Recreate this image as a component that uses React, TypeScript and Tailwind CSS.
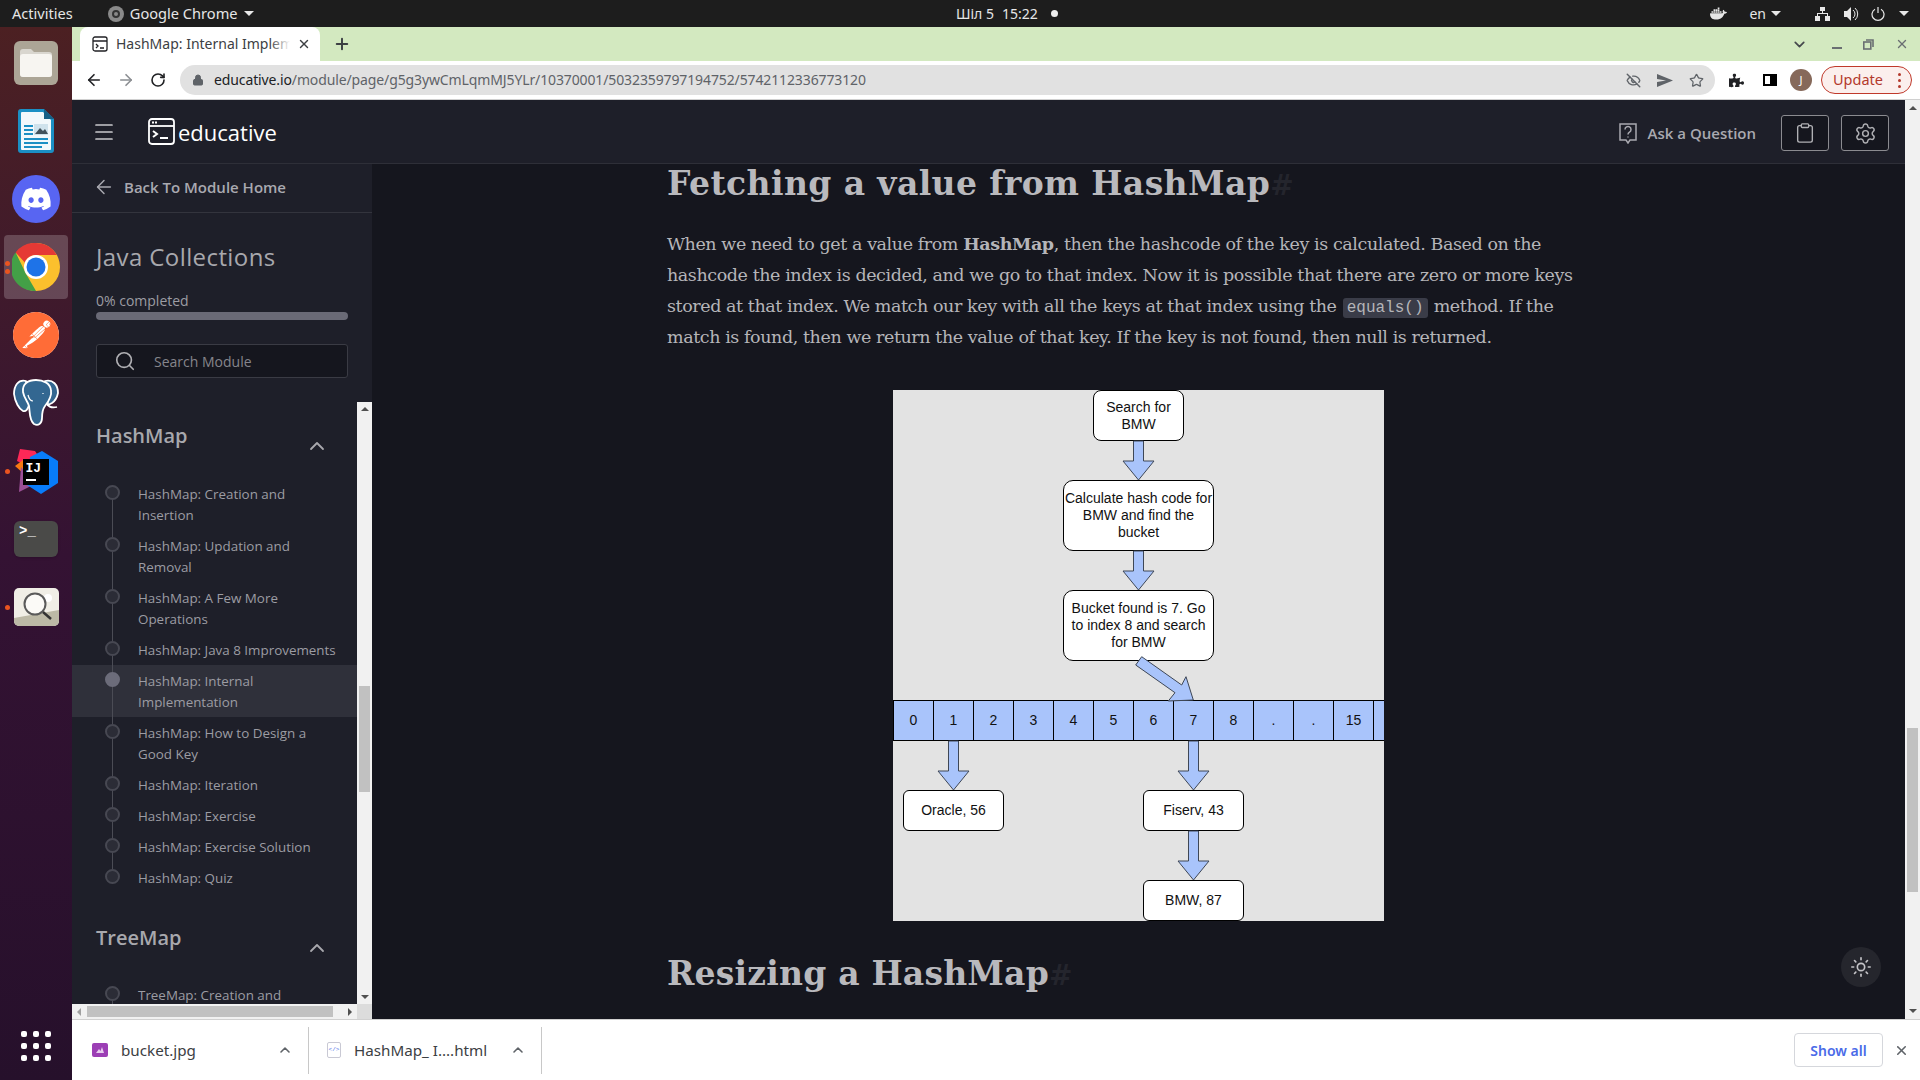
import { ArrowLeft, ChevronDown, ChevronUp, Clipboard, EyeOff, Menu, Plus, RotateCw, Search, Settings, Star, Sun, X, ArrowRight, Lock } from "lucide-react";
import { FaDiscord, FaPuzzlePiece } from "react-icons/fa";
import { SiDocker, SiPostman } from "react-icons/si";

const hashItems = [
  { text: "HashMap: Creation and Insertion" },
  { text: "HashMap: Updation and Removal" },
  { text: "HashMap: A Few More Operations" },
  { text: "HashMap: Java 8 Improvements" },
  { text: "HashMap: Internal Implementation", active: true },
  { text: "HashMap: How to Design a Good Key" },
  { text: "HashMap: Iteration" },
  { text: "HashMap: Exercise" },
  { text: "HashMap: Exercise Solution" },
  { text: "HashMap: Quiz" },
];

const cells = ["0", "1", "2", "3", "4", "5", "6", "7", "8", ".", ".", "15"];

function Caret() {
  return <span className="inline-block w-0 h-0 border-x-[5px] border-x-transparent border-t-[5px] border-t-[#e8e8e8]" />;
}

function ChromeLogo({ size }: { size: number }) {
  return (
    <svg width={size} height={size} viewBox="0 0 48 48">
      <circle cx="24" cy="24" r="24" fill="#fbc02d" />
      <path d="M24 0a24 24 0 0 1 20.8 12H24a12 12 0 0 0-11.2 7.6L3.6 9.4A24 24 0 0 1 24 0z" fill="#e53935" />
      <path d="M3.6 9.4 13.6 30l-.1.1L24 48A24 24 0 0 1 3.6 9.4z" fill="#43a047" />
      <circle cx="24" cy="24" r="12" fill="#fff" />
      <circle cx="24" cy="24" r="9.5" fill="#1e73e8" />
    </svg>
  );
}

function DockIcon({ children, dots = 0, active = false }: { children: React.ReactNode; dots?: number; active?: boolean }) {
  return (
    <div className="relative h-[68px] flex items-center justify-center">
      {active && <div className="absolute left-[4px] top-[2px] w-[64px] h-[64px] rounded bg-white/20" />}
      {dots > 0 && (
        <div className="absolute left-[5px] top-0 h-full flex flex-col justify-center gap-[3px]">
          {dots > 1 && <span className="w-[5px] h-[5px] rounded-full bg-[#e95420]" />}
          <span className="w-[5px] h-[5px] rounded-full bg-[#e95420]" />
        </div>
      )}
      <div className="relative">{children}</div>
    </div>
  );
}

function Dock() {
  return (
    <div className="w-[72px] shrink-0 flex flex-col pt-[2px] bg-gradient-to-b from-[#4c2022] via-[#341233] to-[#26102b]">
      <DockIcon>
        <svg width="44" height="44" viewBox="0 0 44 44">
          <rect width="44" height="44" rx="6" fill="#aca596" />
          <path d="M6 11a3 3 0 0 1 3-3h8l3 3h15a3 3 0 0 1 3 3v19a3 3 0 0 1-3 3H9a3 3 0 0 1-3-3z" fill="#d9d6cf" />
          <path d="M6 16a3 3 0 0 1 3-3h26a3 3 0 0 1 3 3v17a3 3 0 0 1-3 3H9a3 3 0 0 1-3-3z" fill="#f7f5f1" />
        </svg>
      </DockIcon>
      <DockIcon>
        <svg width="38" height="46" viewBox="0 0 38 46">
          <path d="M4 1h23l10 10v31a3 3 0 0 1-3 3H4a3 3 0 0 1-3-3V4a3 3 0 0 1 3-3z" fill="#1b8fc4" />
          <path d="M5 4h21l8 8v29a1 1 0 0 1-1 1H5a1 1 0 0 1-1-1V5a1 1 0 0 1 1-1z" fill="#f2f8fb" />
          <path d="M27 1l10 10H27z" fill="#155f86" />
          <rect x="7" y="17" width="9" height="2" fill="#1b8fc4" />
          <rect x="7" y="21" width="9" height="2" fill="#1b8fc4" />
          <rect x="7" y="25" width="9" height="2" fill="#1b8fc4" />
          <rect x="17" y="16" width="14" height="11" fill="#cfe2ec" />
          <path d="M18 26l5-6 3 3 2-2 3 5z" fill="#42525c" />
          <rect x="7" y="30" width="24" height="2" fill="#1b8fc4" />
          <rect x="7" y="34" width="24" height="2" fill="#1b8fc4" />
          <rect x="7" y="38" width="18" height="2" fill="#1b8fc4" />
        </svg>
      </DockIcon>
      <DockIcon>
        <div className="w-[48px] h-[48px] rounded-full bg-[#5865f2] flex items-center justify-center">
          <FaDiscord className="text-white" size={32} />
        </div>
      </DockIcon>
      <DockIcon dots={2} active>
        <ChromeLogo size={48} />
      </DockIcon>
      <DockIcon>
        <div className="w-[46px] h-[46px] rounded-full bg-white">
          <SiPostman className="text-[#ff6c37]" size={46} />
        </div>
      </DockIcon>
      <DockIcon>
        <svg width="46" height="48" viewBox="0 0 46 48" fill="#336791" stroke="#ffffff" strokeWidth="1.8" strokeLinejoin="round">
          <path d="M13 2C5 0 1 7 1 15c1 8 5 15 9 17 3 1 5-2 6-6z" />
          <path d="M32 2c8-2 13 4 13 12-1 5-3 8-6 10l-4 2z" />
          <path d="M23 1c-8 0-14 4-13 12 1 6 5 10 6 14 1 6 0 14 5 18 4 2 8 0 8-6 0-4 0-8 3-12 4-5 7-10 6-16-1-7-8-10-15-10z" />
          <path d="M34 25c2 3 6 4 10 3" fill="none" />
          <path d="M15 16c1 4 3 6 5 6M30 14v1" fill="none" strokeWidth="1.2" />
        </svg>
      </DockIcon>
      <DockIcon dots={1}>
        <svg className="ml-[2px]" width="44" height="45" viewBox="0 0 44 45">
          <path d="M5 0l15 2 4 6-14 8-8-4z" fill="#fe2857" />
          <path d="M0 17l8-6v13z" fill="#f97a12" />
          <path d="M6 18l-2 25 16-8z" fill="#9b4f96" />
          <path d="M27 2l16 10v22l-17 11-14-9 3-28z" fill="#087cfa" />
          <rect x="8" y="10" width="26" height="26" fill="#000" />
          <text x="10.5" y="23" fill="#fff" fontSize="13" fontWeight="700" fontFamily="'Liberation Mono',monospace">IJ</text>
          <rect x="11" y="30" width="10" height="2" fill="#fff" />
        </svg>
      </DockIcon>
      <DockIcon>
        <div className="w-[44px] h-[36px] rounded-md bg-[#4a4a48] text-white text-[14px] leading-[16px] pl-[5px] pt-[2px] font-bold font-['Liberation_Mono',monospace] shadow">
          {">_"}
        </div>
      </DockIcon>
      <DockIcon dots={1}>
        <svg width="45" height="38" viewBox="0 0 45 38">
          <rect width="45" height="38" rx="5" fill="#f0eee6" />
          <path d="M0 30L45 22v11a5 5 0 0 1-5 5H5a5 5 0 0 1-5-5z" fill="#bcb9a6" />
          <circle cx="34" cy="10" r="4" fill="#fff" />
          <circle cx="21" cy="16" r="10.5" fill="#fbfaf7" stroke="#5a5a5a" strokeWidth="2" />
          <path d="M29 24l8 7" stroke="#333" strokeWidth="2.5" />
        </svg>
      </DockIcon>
      <div className="mt-auto mb-[19px] mx-auto grid grid-cols-3 gap-x-[6px] gap-y-[6px]">
        {Array.from({ length: 9 }).map((_, i) => (
          <span key={i} className="w-[6px] h-[6px] rounded-[2px] bg-white" />
        ))}
      </div>
    </div>
  );
}

function TopBar() {
  return (
    <div className="h-[27px] shrink-0 bg-[#1d1d1d] text-[#e6e6e6] text-[14.6px] flex items-center relative font-['Noto_Sans',sans-serif]">
      <span className="ml-[12px]">Activities</span>
      <span className="ml-[35px] w-[16px] h-[16px] rounded-full bg-[#8a8a8a] flex items-center justify-center">
        <span className="w-[8px] h-[8px] rounded-full border-2 border-[#333]" />
      </span>
      <span className="ml-[6px]">Google Chrome</span>
      <span className="ml-[6px] flex"><Caret /></span>
      <div className="absolute left-[956px] flex items-center text-[14px]">
        <span>Шіл 5</span>
        <span className="ml-[8px]">15:22</span>
        <span className="ml-[13px] w-[7px] h-[7px] rounded-full bg-[#eee]" />
      </div>
      <div className="ml-auto flex items-center">
        <SiDocker size={17} />
        <span className="ml-[22px] text-[14px]">en</span>
        <span className="ml-[5px] flex"><Caret /></span>
        <svg className="ml-[34px]" width="15" height="14" viewBox="0 0 15 14" fill="#e8e8e8">
          <rect x="5" y="0" width="5" height="4" />
          <rect x="0" y="9" width="5" height="5" />
          <rect x="10" y="9" width="5" height="5" />
          <path d="M7 4h1v2h5v3h-1V7H3v2H2V6h5z" />
        </svg>
        <svg className="ml-[14px]" width="15" height="14" viewBox="0 0 15 14" fill="#e8e8e8">
          <path d="M0 4h3l4-4v14l-4-4H0z" />
          <path d="M9 3a5 5 0 0 1 0 8M11 1a8 8 0 0 1 0 12" stroke="#e8e8e8" fill="none" />
        </svg>
        <svg className="ml-[12px]" width="14" height="14" viewBox="0 0 14 14" fill="none" stroke="#e8e8e8" strokeWidth="1.2">
          <path d="M4 2.2a6 6 0 1 0 6 0M7 0v6" />
        </svg>
        <span className="ml-[14px] mr-[11px] flex"><Caret /></span>
      </div>
    </div>
  );
}

function TabStrip() {
  return (
    <div className="h-[34px] shrink-0 bg-[#d3e9c0] flex items-end pl-[8px] font-['Noto_Sans',sans-serif]">
      <div className="w-[240px] h-[34px] bg-white rounded-t-[8px] flex items-center pl-[12px] relative">
        <svg width="16" height="16" viewBox="0 0 16 16" fill="none" stroke="#202124" strokeWidth="1.3">
          <rect x="1" y="1" width="14" height="14" rx="2" />
          <path d="M1 5h14M4 8l2 2-2 2M8 12h4" />
        </svg>
        <span className="ml-[8px] mb-[2px] w-[174px] overflow-hidden whitespace-nowrap text-[14px] text-[#3c4043]">HashMap: Internal Implementation</span>
        <div className="absolute left-[190px] top-0 h-full w-[20px] bg-gradient-to-r from-white/0 to-white" />
        <X size={14} strokeWidth={2.5} className="ml-[7px] text-[#3c4043]" />
      </div>
      <Plus size={18} strokeWidth={2.6} className="ml-[13px] mb-[8px] text-[#3c4043]" />
      <div className="ml-auto flex items-center h-full">
        <ChevronDown size={17} strokeWidth={2.4} className="text-[#45494d]" />
        <span className="ml-[24px] mt-[8px] w-[10px] h-[2px] bg-[#6a6f72]" />
        <svg className="ml-[21px]" width="11" height="11" viewBox="0 0 11 11" fill="none" stroke="#6a6f72" strokeWidth="1.6">
          <rect x="0.8" y="3" width="7" height="7" />
          <path d="M3 1h7v7" />
        </svg>
        <X size={14} strokeWidth={2.4} className="ml-[21px] mr-[11px] text-[#6a6f72]" />
      </div>
    </div>
  );
}

function Toolbar() {
  return (
    <div className="h-[39px] shrink-0 bg-white border-b border-[#d0d0d0] flex items-center pl-[13px] font-['Noto_Sans',sans-serif]">
      <ArrowLeft size={18} strokeWidth={2.2} className="text-[#202124]" />
      <ArrowRight size={18} strokeWidth={2.2} className="ml-[14px] text-[#8b8e92]" />
      <RotateCw size={16} strokeWidth={2.4} className="ml-[15px] text-[#202124]" />
      <div className="ml-[14px] w-[1535px] h-[30px] rounded-full bg-[#e1e1e1] flex items-center pl-[12px]">
        <Lock size={12} fill="#5f6368" className="text-[#5f6368]" />
        <span className="ml-[10px] mb-[1px] text-[14px] tracking-[-0.12px] text-[#5f6368] whitespace-nowrap">
          <span className="text-[#202124]">educative.io</span>/module/page/g5g3ywCmLqmMJ5YLr/10370001/5032359797194752/5742112336773120
        </span>
        <div className="ml-auto mr-[11px] flex items-center gap-[16px] text-[#5f6368]">
          <EyeOff size={15} strokeWidth={2.2} />
          <svg width="16" height="13" viewBox="0 0 16 13" fill="#5f6368"><path d="M0 0l16 6.5L0 13V8l9-1.5L0 5z" /></svg>
          <Star size={15} strokeWidth={2} />
        </div>
      </div>
      <FaPuzzlePiece size={15} className="ml-[14px] text-[#202124]" />
      <span className="ml-[19px] w-[14px] h-[12px] border-[2px] border-black bg-white flex justify-end"><span className="w-[5px] h-full bg-black" /></span>
      <span className="ml-[13px] w-[22px] h-[22px] rounded-full bg-[#86695a] text-white text-[11px] flex items-center justify-center">J</span>
      <div className="ml-[9px] w-[91px] h-[28px] rounded-full border border-[#c0392b] bg-[#fbefed] flex items-center pl-[11px] text-[14.5px] text-[#b3392c]">
        Update
        <span className="ml-auto mr-[10px] flex flex-col gap-[3px]">
          <span className="w-[3px] h-[3px] rounded-full bg-[#b3392c]" />
          <span className="w-[3px] h-[3px] rounded-full bg-[#b3392c]" />
          <span className="w-[3px] h-[3px] rounded-full bg-[#b3392c]" />
        </span>
      </div>
    </div>
  );
}

function AppHeader() {
  return (
    <div className="h-[64px] shrink-0 bg-[#1e1f29] border-b border-[#2e2f38] flex items-center font-['Open_Sans',sans-serif]">
      <Menu size={24} strokeWidth={1.7} className="ml-[20px] text-[#c9c9cc]" />
      <svg className="ml-[32px]" width="27" height="27" viewBox="0 0 27 27" fill="none" stroke="#fff" strokeWidth="1.8">
        <rect x="1" y="1" width="25" height="25" rx="3" />
        <path d="M1 8h25" />
        <path d="M5 13l4 3-4 3M12 20h8" strokeWidth="2" />
        <path d="M4 4.5h5" strokeWidth="2" strokeDasharray="2 1" />
      </svg>
      <span className="ml-[3px] text-[22px] leading-none text-white">educative</span>
      <div className="ml-auto mt-[3px] flex items-center">
        <svg width="18" height="21" viewBox="0 0 18 21" fill="none" stroke="#a9a9b0" strokeWidth="1.5">
          <path d="M1 1h16v16h-6l-2 3-2-3H1z" />
          <path d="M6 6.5a3 3 0 1 1 4.5 2.6c-1 .6-1.5 1-1.5 2.4M9 13.5v1" />
        </svg>
        <span className="ml-[11px] text-[15px] font-semibold text-[#a9a9b0]">Ask a Question</span>
        <div className="ml-[25px] w-[48px] h-[36px] rounded-[3px] border border-[#8b8b90] bg-[#15161e] flex items-center justify-center">
          <Clipboard size={22} strokeWidth={1.5} className="text-[#b0b0b4]" />
        </div>
        <div className="ml-[12px] mr-[16px] w-[48px] h-[36px] rounded-[3px] border border-[#8b8b90] bg-[#15161e] flex items-center justify-center">
          <Settings size={23} strokeWidth={1.5} className="text-[#b0b0b4]" />
        </div>
      </div>
    </div>
  );
}

function ListItem({ text, active, first, last }: { text: string; active?: boolean; first?: boolean; last?: boolean }) {
  return (
    <li className={`flex pl-[33px] ${active ? "bg-[#2f303a]" : ""}`}>
      <div className="w-[15px] shrink-0 flex flex-col items-center">
        <span className={`w-px h-[7px] ${first ? "" : "bg-[#4b4c55]"}`} />
        <span className={`w-[15px] h-[15px] shrink-0 rounded-full border-2 ${active ? "bg-[#6c6c7a] border-[#6c6c7a]" : "bg-[#2b2c36] border-[#474852]"}`} />
        {!last && <span className="w-px flex-1 bg-[#4b4c55]" />}
      </div>
      <div className="ml-[18px] w-[200px] pt-[6px] pb-[4px] text-[13.4px] leading-[21px] text-[#9c9ca3]">{text}</div>
    </li>
  );
}

function Sidebar() {
  return (
    <div className="w-[300px] shrink-0 bg-[#1e1f29] flex flex-col font-['Open_Sans',sans-serif]">
      <div className="h-[49px] shrink-0 border-b border-[#33343d] flex items-center pl-[21px] pb-[2px]">
        <ArrowLeft size={22} strokeWidth={1.6} className="text-[#a9a9b0]" />
        <span className="ml-[9px] text-[15px] font-semibold text-[#a9a9b0]">Back To Module Home</span>
      </div>
      <div className="h-[189px] shrink-0 px-[24px] pt-[28px]">
        <h1 className="text-[24px] leading-[32px] text-[#a8a8ad] tracking-[0.4px]">Java Collections</h1>
        <div className="mt-[18px] text-[14px] leading-[20px] text-[#9c9ca3]">0% completed</div>
        <div className="mt-[1px] h-[8px] rounded-full bg-[#6a6a76]" />
        <div className="mt-[24px] h-[34px] rounded-[3px] border border-[#3a3b44] bg-[#15161e] flex items-center pl-[17px] text-[14px] text-[#85858c]">
          <Search size={22} strokeWidth={1.8} className="text-[#b0b0b4]" />
          <span className="ml-[18px]">Search Module</span>
        </div>
      </div>
      <div className="flex-1 min-h-0 flex">
        <div className="flex-1 min-w-0 overflow-hidden">
          <section className="pt-[20px] pb-[10px]">
            <div className="h-[56px] pl-[24px] pr-[28px] flex items-start justify-between">
              <h2 className="text-[20px] leading-[28px] font-semibold text-[#a8a8ad]">HashMap</h2>
              <ChevronUp size={24} strokeWidth={1.8} className="mt-[12px] text-[#a8a8ad]" />
            </div>
            <ul>
              {hashItems.map((item, i) => (
                <ListItem key={item.text} text={item.text} active={item.active} first={i === 0} last={i === hashItems.length - 1} />
              ))}
            </ul>
          </section>
          <section className="pt-[21px]">
            <div className="h-[55px] pl-[24px] pr-[28px] flex items-start justify-between">
              <h2 className="text-[20px] leading-[28px] font-semibold text-[#a8a8ad]">TreeMap</h2>
              <ChevronUp size={24} strokeWidth={1.8} className="mt-[12px] text-[#a8a8ad]" />
            </div>
            <ul>
              <ListItem text="TreeMap: Creation and Insertion" first />
            </ul>
          </section>
        </div>
        <div className="w-[15px] shrink-0 bg-[#f1f1f1] flex flex-col items-center">
          <span className="mt-[5px] w-0 h-0 border-x-[4px] border-x-transparent border-b-[4px] border-b-[#505050]" />
          <span className="mt-[275px] w-[11px] h-[106px] bg-[#c1c1c1]" />
          <span className="mt-auto mb-[5px] w-0 h-0 border-x-[4px] border-x-transparent border-t-[4px] border-t-[#505050]" />
        </div>
      </div>
      <div className="h-[15px] shrink-0 flex">
        <div className="flex-1 bg-[#f1f1f1] flex items-center pl-[5px]">
          <span className="w-0 h-0 border-y-[4px] border-y-transparent border-r-[4px] border-r-[#a0a0a0]" />
          <span className="ml-[6px] w-[246px] h-[11px] bg-[#c1c1c1]" />
          <span className="ml-auto mr-[5px] w-0 h-0 border-y-[4px] border-y-transparent border-l-[4px] border-l-[#505050]" />
        </div>
        <div className="w-[15px] bg-[#dcdcdc]" />
      </div>
    </div>
  );
}

function Node({ className, children }: { className: string; children: React.ReactNode }) {
  return (
    <div className={`absolute bg-white border border-black flex items-center justify-center text-center text-[14px] leading-[17px] text-[#111] ${className}`}>
      {children}
    </div>
  );
}

function Diagram() {
  const arrow = (cx: number, top: number, bottom: number) => {
    const neck = bottom - 19;
    return `${cx - 5},${top} ${cx + 5},${top} ${cx + 5},${neck} ${cx + 15.5},${neck} ${cx},${bottom} ${cx - 15.5},${neck} ${cx - 5},${neck}`;
  };
  return (
    <div className="relative w-[491px] h-[531px] mx-auto bg-[#e3e3e3] overflow-hidden font-['Liberation_Sans',sans-serif]">
      <Node className="left-[200px] top-0 w-[91px] h-[51px] rounded-[8px]">Search for<br />BMW</Node>
      <Node className="left-[170px] top-[90px] w-[151px] h-[71px] rounded-[10px]">Calculate hash code for<br />BMW and find the<br />bucket</Node>
      <Node className="left-[170px] top-[200px] w-[151px] h-[71px] rounded-[10px]">Bucket found is 7. Go<br />to index 8 and search<br />for BMW</Node>
      <div className="absolute left-0 top-[310px] w-[491px] h-[41px] flex bg-[#a9c4fb] border-y border-black">
        {cells.map((c, i) => (
          <div key={i} className="w-[40px] h-full shrink-0 border-l border-black flex items-center justify-center text-[14px] text-[#111]">{c}</div>
        ))}
        <div className="flex-1 border-l border-black" />
      </div>
      <Node className="left-[10px] top-[400px] w-[101px] h-[41px] rounded-[6px]">Oracle, 56</Node>
      <Node className="left-[250px] top-[400px] w-[101px] h-[41px] rounded-[6px]">Fiserv, 43</Node>
      <Node className="left-[250px] top-[490px] w-[101px] h-[41px] rounded-[6px]">BMW, 87</Node>
      <svg className="absolute inset-0" width="491" height="531" viewBox="0 0 491 531" fill="#a9c4fb" stroke="#3e4756" strokeWidth="1">
        <polygon points={arrow(245.5, 51, 90)} />
        <polygon points={arrow(245.5, 161, 200)} />
        <polygon points="242.7,275 248.7,266.7 288.7,295 293,286.7 300.3,310 275.3,311 282,302.7" />
        <polygon points={arrow(60.5, 351, 400)} />
        <polygon points={arrow(300.5, 351, 400)} />
        <polygon points={arrow(300.5, 441, 490)} />
      </svg>
    </div>
  );
}

function Content() {
  return (
    <div className="flex-1 min-w-0 bg-[#15161e] relative overflow-hidden">
      <div className="w-[943px] ml-[295px] pt-[1px] font-['DejaVu_Serif',serif] text-[#b5b5b9]">
        <h2 className="text-[33px] leading-[38px] font-bold tracking-[0.4px] text-[#b9b9bd] whitespace-nowrap">
          Fetching a value from HashMap<span className="text-[28px] text-[#24252d]">#</span>
        </h2>
        <p className="mt-[24px] text-[17.5px] leading-[31px] whitespace-nowrap tracking-[-0.42px]">
          When we need to get a value from <strong className="font-bold">HashMap</strong>, then the hashcode of the key is calculated. Based on the<br />
          hashcode the index is decided, and we go to that index. Now it is possible that there are zero or more keys<br />
          stored at that index. We match our key with all the keys at that index using the{" "}
          <code className="mx-[1px] px-[4px] py-[1px] rounded-[3px] bg-[#3a3c48] text-[16px] leading-none tracking-normal font-['Liberation_Mono',monospace] text-[#b5b5b9]">equals()</code>{" "}
          method. If the<br />
          match is found, then we return the value of that key. If the key is not found, then null is returned.
        </p>
        <div className="mt-[37px]">
          <Diagram />
        </div>
        <h2 className="mt-[34px] text-[33px] leading-[38px] font-bold tracking-[0.2px] text-[#b9b9bd] whitespace-nowrap">
          Resizing a HashMap<span className="text-[28px] text-[#24252d]">#</span>
        </h2>
      </div>
      <div className="absolute right-[24px] bottom-[32px] w-[40px] h-[40px] rounded-full bg-[#25262d] flex items-center justify-center">
        <Sun size={22} strokeWidth={1.8} className="text-[#c4c4c8]" />
      </div>
    </div>
  );
}

function PageScrollbar() {
  return (
    <div className="w-[15px] shrink-0 bg-[#f1f1f1] flex flex-col items-center">
      <span className="mt-[6px] w-0 h-0 border-x-[4px] border-x-transparent border-b-[4px] border-b-[#505050]" />
      <span className="mt-[618px] w-[11px] h-[164px] bg-[#c1c1c1]" />
      <span className="mt-auto mb-[6px] w-0 h-0 border-x-[4px] border-x-transparent border-t-[4px] border-t-[#505050]" />
    </div>
  );
}

function Downloads() {
  return (
    <div className="h-[61px] shrink-0 bg-white border-t border-[#d0d0d0] flex items-center font-['Noto_Sans',sans-serif] text-[15.2px] text-[#3c4043]">
      <span className="ml-[20px] w-[16px] h-[14px] rounded-[2px] bg-[#9c3fb5] flex items-center justify-center">
        <svg width="8" height="6" viewBox="0 0 8 6" fill="#e8cdee"><path d="M0 6l3-4 1.5 2L6 0l2 6z" /></svg>
      </span>
      <span className="ml-[13px] w-[82px]">bucket.jpg</span>
      <ChevronUp size={16} strokeWidth={2.4} className="ml-[74px] text-[#5f6368]" />
      <span className="ml-[15px] w-px h-[47px] bg-[#c8c8c8]" />
      <span className="ml-[18px] w-[14px] h-[16px] rounded-[2px] border border-[#c9c9d4] text-[6px] leading-[14px] text-center text-[#4a6be8] font-['Liberation_Mono',monospace]">{"</>"}</span>
      <span className="ml-[13px] w-[135px] whitespace-nowrap">HashMap_ I....html</span>
      <ChevronUp size={16} strokeWidth={2.4} className="ml-[21px] text-[#5f6368]" />
      <span className="ml-[15px] w-px h-[47px] bg-[#c8c8c8]" />
      <div className="ml-auto w-[89px] h-[34px] rounded-[4px] border border-[#d5d7dc] flex items-center justify-center text-[14px] font-semibold text-[#4a6be8]">Show all</div>
      <X size={15} strokeWidth={2.5} className="ml-[11px] mr-[11px] text-[#5f6368]" />
    </div>
  );
}

export default function App() {
  return (
    <div className="w-[1920px] h-[1080px] flex flex-col overflow-hidden bg-[#15161e]">
      <TopBar />
      <div className="flex-1 min-h-0 flex">
        <Dock />
        <div className="flex-1 min-w-0 flex flex-col">
          <TabStrip />
          <Toolbar />
          <div className="flex-1 min-h-0 flex">
            <div className="flex-1 min-w-0 flex flex-col">
              <AppHeader />
              <div className="flex-1 min-h-0 flex">
                <Sidebar />
                <Content />
              </div>
            </div>
            <PageScrollbar />
          </div>
          <Downloads />
        </div>
      </div>
    </div>
  );
}
